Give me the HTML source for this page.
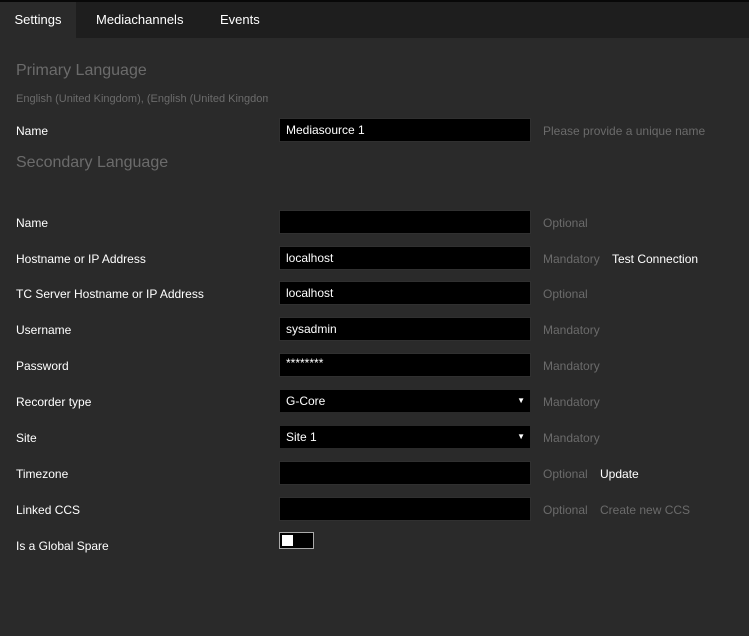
<!DOCTYPE html>
<html><head><style>
body{margin:0;width:749px;height:636px;background:#2a2a2a;font-family:"Liberation Sans",sans-serif;position:relative;overflow:hidden;color:#fff}
.top{position:absolute;left:0;top:0;width:749px;height:38px;background:#1e1e1e;border-top:2px solid #080808;box-sizing:border-box}
.tab{position:absolute;top:2px;height:36px;line-height:35px;font-size:13px;color:#fff}
.a{position:absolute;font-size:12px;margin-top:1px}
.h{position:absolute;left:16px;font-size:16px;color:#6b6b6b;margin-top:1px}
.in{position:absolute;left:279px;width:252px;height:24px;background:#000;border:1px solid #303030;box-sizing:border-box;font-size:12px;line-height:22px;padding-left:6px}
.sel{border-color:#2a2a2a}
.sel:after{content:"\25BC";position:absolute;right:5px;top:0;font-size:8px}
.g{color:#6b6b6b}
</style></head><body>
<div class="top"></div>
<div class="tab" style="left:0;width:76px;background:#2a2a2a;text-align:center">Settings</div>
<div class="tab" style="left:96px">Mediachannels</div>
<div class="tab" style="left:220px">Events</div>
<div class="h" style="top:61px">Primary Language</div>
<div class="a g" style="left:16px;top:92px;font-size:11px;width:252px;overflow:hidden;white-space:nowrap">English (United Kingdom), (English (United Kingdom))</div>
<div class="a" style="left:16px;top:123px">Name</div>
<div class="in" style="top:118px">Mediasource 1</div>
<div class="a g" style="left:543px;top:123px">Please provide a unique name</div>
<div class="h" style="top:153px">Secondary Language</div>

<div class="a" style="left:16px;top:215px">Name</div><div class="in" style="top:210px"></div><div class="a g" style="left:543px;top:215px">Optional</div>
<div class="a" style="left:16px;top:251px">Hostname or IP Address</div><div class="in" style="top:246px">localhost</div><div class="a g" style="left:543px;top:251px">Mandatory</div><div class="a" style="left:612px;top:251px">Test Connection</div>
<div class="a" style="left:16px;top:286px">TC Server Hostname or IP Address</div><div class="in" style="top:281px">localhost</div><div class="a g" style="left:543px;top:286px">Optional</div>
<div class="a" style="left:16px;top:322px">Username</div><div class="in" style="top:317px">sysadmin</div><div class="a g" style="left:543px;top:322px">Mandatory</div>
<div class="a" style="left:16px;top:358px">Password</div><div class="in" style="top:353px;line-height:18px">********</div><div class="a g" style="left:543px;top:358px">Mandatory</div>
<div class="a" style="left:16px;top:394px">Recorder type</div><div class="in sel" style="top:389px">G-Core</div><div class="a g" style="left:543px;top:394px">Mandatory</div>
<div class="a" style="left:16px;top:430px">Site</div><div class="in sel" style="top:425px">Site 1</div><div class="a g" style="left:543px;top:430px">Mandatory</div>
<div class="a" style="left:16px;top:466px">Timezone</div><div class="in" style="top:461px"></div><div class="a g" style="left:543px;top:466px">Optional</div><div class="a" style="left:600px;top:466px">Update</div>
<div class="a" style="left:16px;top:502px">Linked CCS</div><div class="in" style="top:497px"></div><div class="a g" style="left:543px;top:502px">Optional</div><div class="a g" style="left:600px;top:502px">Create new CCS</div>
<div class="a" style="left:16px;top:538px">Is a Global Spare</div>
<div style="position:absolute;left:279px;top:532px;width:35px;height:17px;border:1px solid #aaa;box-sizing:border-box;background:#000"><div style="position:absolute;left:2px;top:2px;width:11px;height:11px;background:#fff"></div></div>
</body></html>
